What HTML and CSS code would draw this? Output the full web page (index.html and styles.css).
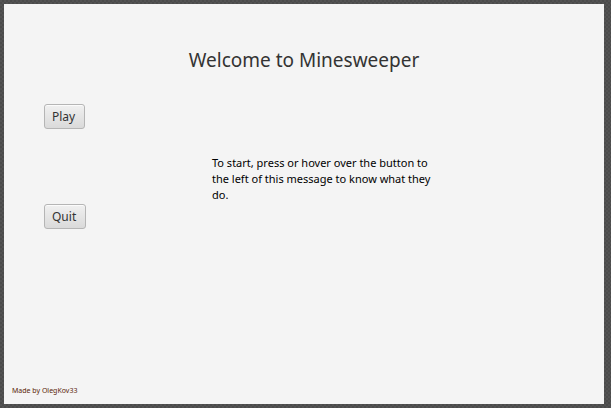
FILE: index.html
```html
<!DOCTYPE html>
<html lang="en">
<head>
<meta charset="utf-8">
<title>Minesweeper</title>
<link rel="stylesheet" href="styles.css">
</head>
<body>
<main class="window">
  <h1 class="title">Welcome to Minesweeper</h1>
  <div class="content">
    <nav class="menu">
      <button class="button" type="button">Play</button>
      <button class="button" type="button">Quit</button>
    </nav>
    <p class="message">To start, press or hover over the button to the left of this message to know what they do.</p>
  </div>
  <footer class="credit">Made by OlegKov33</footer>
</main>
</body>
</html>
```
FILE: styles.css
```css
* {
  box-sizing: border-box;
}

body {
  margin: 0;
  min-height: 100vh;
  display: flex;
  padding: 4px 7px 4px 4px;
  background: repeating-conic-gradient(#4b4b4b 0 25%, #535353 0 50%) 0 0 / 4px 4px;
  font-family: "Noto Sans", "Open Sans", sans-serif;
  font-size: 12px;
  line-height: 16px;
  color: #000;
}

.window {
  flex: 1;
  display: flex;
  flex-direction: column;
  padding: 42px 8px 8px;
  background: #f4f4f4;
}

.title {
  margin: 0;
  font-size: 19px;
  line-height: 28px;
  font-weight: 400;
  text-align: center;
  color: #333;
}

.content {
  flex: 1;
  display: flex;
  padding: 30px 32px 0;
}

.menu {
  flex: 0 0 168px;
  display: flex;
  flex-direction: column;
  align-items: flex-start;
  gap: 75px;
}

.button {
  height: 25px;
  padding: 0 9px 0 7px;
  border: 1px solid #b5b5b5;
  border-radius: 3px;
  background: linear-gradient(#f0f0f0, #dadada);
  box-shadow: inset 0 1px #fbfbfb;
  font: inherit;
  color: #333;
}

.message {
  max-width: 232px;
  margin: 51px 0 0;
  font-size: 11px;
}

.credit {
  font-size: 7px;
  line-height: 10px;
  color: #5a2408;
}
```
